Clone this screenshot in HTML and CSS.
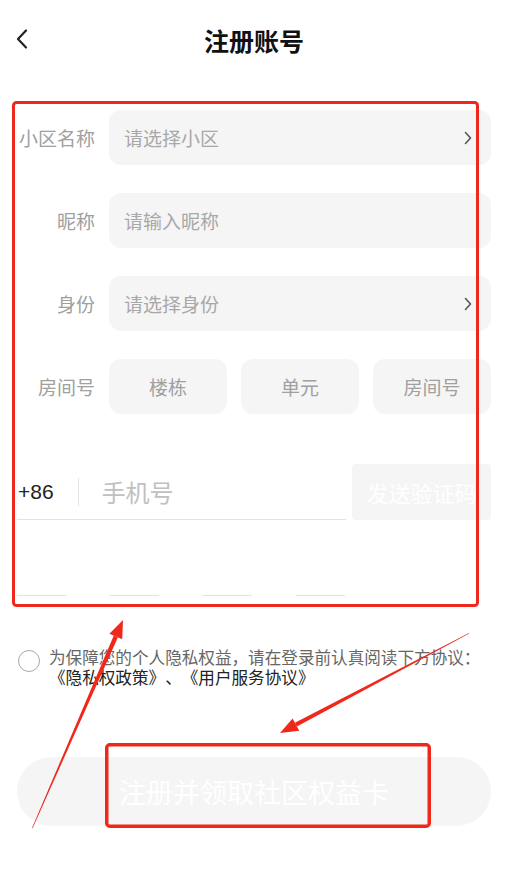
FILE: index.html
```html
<!DOCTYPE html>
<html lang="zh-CN">
<head>
    <meta charset="UTF-8">
    <meta name="viewport" content="width=device-width, initial-scale=1.0">
    <title>注册账号</title>
    <link rel="stylesheet" href="styles.css">
</head>
<body>
    <div class="page">
        <header class="nav">
            <svg class="back" width="12" height="20" viewBox="0 0 12 20"><path d="M10 1.5 L2 10 L10 18.5" fill="none" stroke="#222" stroke-width="2.2" stroke-linecap="round" stroke-linejoin="round"/></svg>
            <h1>注册账号</h1>
        </header>

        <form class="form">
            <div class="row">
                <label>小区名称</label>
                <div class="field">
                    <span class="placeholder">请选择小区</span>
                    <svg class="arrow-right" width="8" height="14" viewBox="0 0 8 14"><path d="M1.5 1.5 L6.5 7 L1.5 12.5" fill="none" stroke="#555" stroke-width="1.6" stroke-linecap="round" stroke-linejoin="round"/></svg>
                </div>
            </div>

            <div class="row">
                <label>昵称</label>
                <div class="field">
                    <span class="placeholder">请输入昵称</span>
                </div>
            </div>

            <div class="row">
                <label>身份</label>
                <div class="field">
                    <span class="placeholder">请选择身份</span>
                    <svg class="arrow-right" width="8" height="14" viewBox="0 0 8 14"><path d="M1.5 1.5 L6.5 7 L1.5 12.5" fill="none" stroke="#555" stroke-width="1.6" stroke-linecap="round" stroke-linejoin="round"/></svg>
                </div>
            </div>

            <div class="row">
                <label>房间号</label>
                <div class="room">
                    <div class="room-box">楼栋</div>
                    <div class="room-box">单元</div>
                    <div class="room-box">房间号</div>
                </div>
            </div>

            <div class="phone-row">
                <div class="phone">
                    <span class="code">+86</span>
                    <span class="divider"></span>
                    <span class="phone-input">手机号</span>
                </div>
                <div class="send">发送验证码</div>
            </div>

            <div class="sms">
                <span></span>
                <span></span>
                <span></span>
                <span></span>
            </div>
        </form>

        <div class="agree">
            <span class="radio"></span>
            <div class="agree-text">
                <p>为保障您的个人隐私权益，请在登录前认真阅读下方协议：</p>
                <p class="links">《隐私权政策》、《用户服务协议》</p>
            </div>
        </div>

        <button class="submit" type="button">注册并领取社区权益卡</button>

        <!-- annotation overlay -->
        <svg class="marks" width="512" height="891" viewBox="0 0 512 891">
            <rect x="13.5" y="102.5" width="464" height="503" rx="3" fill="none" stroke="#f0281c" stroke-width="3"/>
            <rect x="106.75" y="744.75" width="322.5" height="81.5" rx="3" fill="none" stroke="#f0281c" stroke-width="3.5"/>
            <polygon points="32,828 32.6,828.3 117.8,637.4 113.8,635.6" fill="#f0281c"/>
            <polygon points="123,620 109.4,633.7 122.2,639.3" fill="#f0281c"/>
            <polygon points="469,633 469.3,633.6 296.9,726.5 294.9,722.7" fill="#f0281c"/>
            <polygon points="280,733 292.6,718.4 299.2,730.8" fill="#f0281c"/>
        </svg>
    </div>
</body>
</html>
```

FILE: styles.css
```css
/* General Styles */
body {
    margin: 0;
    background-color: #fff;
    font-family: "Noto Sans CJK SC", "Noto Sans", sans-serif;
    text-spacing-trim: space-all;
}

.page {
    position: relative;
    width: 512px;
    height: 891px;
    overflow: hidden;
}

.nav {
    height: 80px;
    display: flex;
    align-items: center;
    justify-content: center;
    position: relative;
}

.nav h1 {
    margin: 0 0 0 -4px;
    font-size: 25px;
    font-weight: bold;
    color: #111;
}

.back {
    position: absolute;
    left: 16px;
    top: 29px;
}

.form {
    padding: 30px 21px 0 17px;
    display: flex;
    flex-direction: column;
}

.row {
    display: flex;
    align-items: center;
    height: 55px;
    margin-bottom: 28px;
}

.row label {
    width: 78px;
    margin-right: 14px;
    text-align: right;
    font-size: 19px;
    color: #a0a0a0;
    white-space: nowrap;
}

.field {
    flex: 1;
    height: 55px;
    background: #f5f5f5;
    border-radius: 12px;
    display: flex;
    align-items: center;
    justify-content: space-between;
    padding: 0 19px 0 15px;
}

.placeholder {
    font-size: 19px;
    color: #a8a8a8;
}

.room {
    flex: 1;
    display: flex;
    gap: 14px;
}

.room-box {
    flex: 1;
    height: 55px;
    background: #f5f5f5;
    border-radius: 12px;
    display: flex;
    align-items: center;
    justify-content: center;
    font-size: 19px;
    color: #a0a0a0;
}

.phone-row {
    display: flex;
    margin-top: 22px;
    height: 56px;
}

.phone {
    width: 329px;
    display: flex;
    align-items: center;
    border-bottom: 1px solid #e3e3e3;
}

.code {
    font-family: "Liberation Sans", sans-serif;
    font-size: 21px;
    color: #222;
    margin-left: 1px;
}

.divider {
    width: 1px;
    height: 28px;
    background: #e6e6e6;
    margin: 0 23px 0 24px;
}

.phone-input {
    font-size: 24px;
    color: #c0c0c0;
}

.send {
    margin-left: 6px;
    flex: 1;
    background: #f5f5f5;
    border-radius: 4px;
    display: flex;
    align-items: center;
    justify-content: center;
    font-size: 22px;
    color: #fff;
}

.sms {
    display: flex;
    gap: 44px;
    height: 76px;
    align-items: flex-end;
}

.sms span {
    width: 49px;
    height: 1px;
    background: #e3e3e3;
}

.agree {
    display: flex;
    margin-top: 51px;
    padding-left: 18px;
}

.radio {
    width: 20px;
    height: 20px;
    border: 1.5px solid #aaa;
    border-radius: 50%;
    margin-top: 3px;
    margin-right: 9px;
    flex-shrink: 0;
}

.agree-text p {
    margin: 0;
    font-size: 16.6px;
    line-height: 20px;
    color: #666;
    white-space: nowrap;
}

.agree-text .links {
    color: #222;
}

.submit {
    display: block;
    margin: 70px 0 0 17px;
    width: 474px;
    height: 69px;
    border: none;
    border-radius: 35px;
    background: #f5f5f5;
    color: #fff;
    font-family: "Noto Sans CJK SC", sans-serif;
    font-size: 27px;
}

.marks {
    position: absolute;
    left: 0;
    top: 0;
    pointer-events: none;
}
```
